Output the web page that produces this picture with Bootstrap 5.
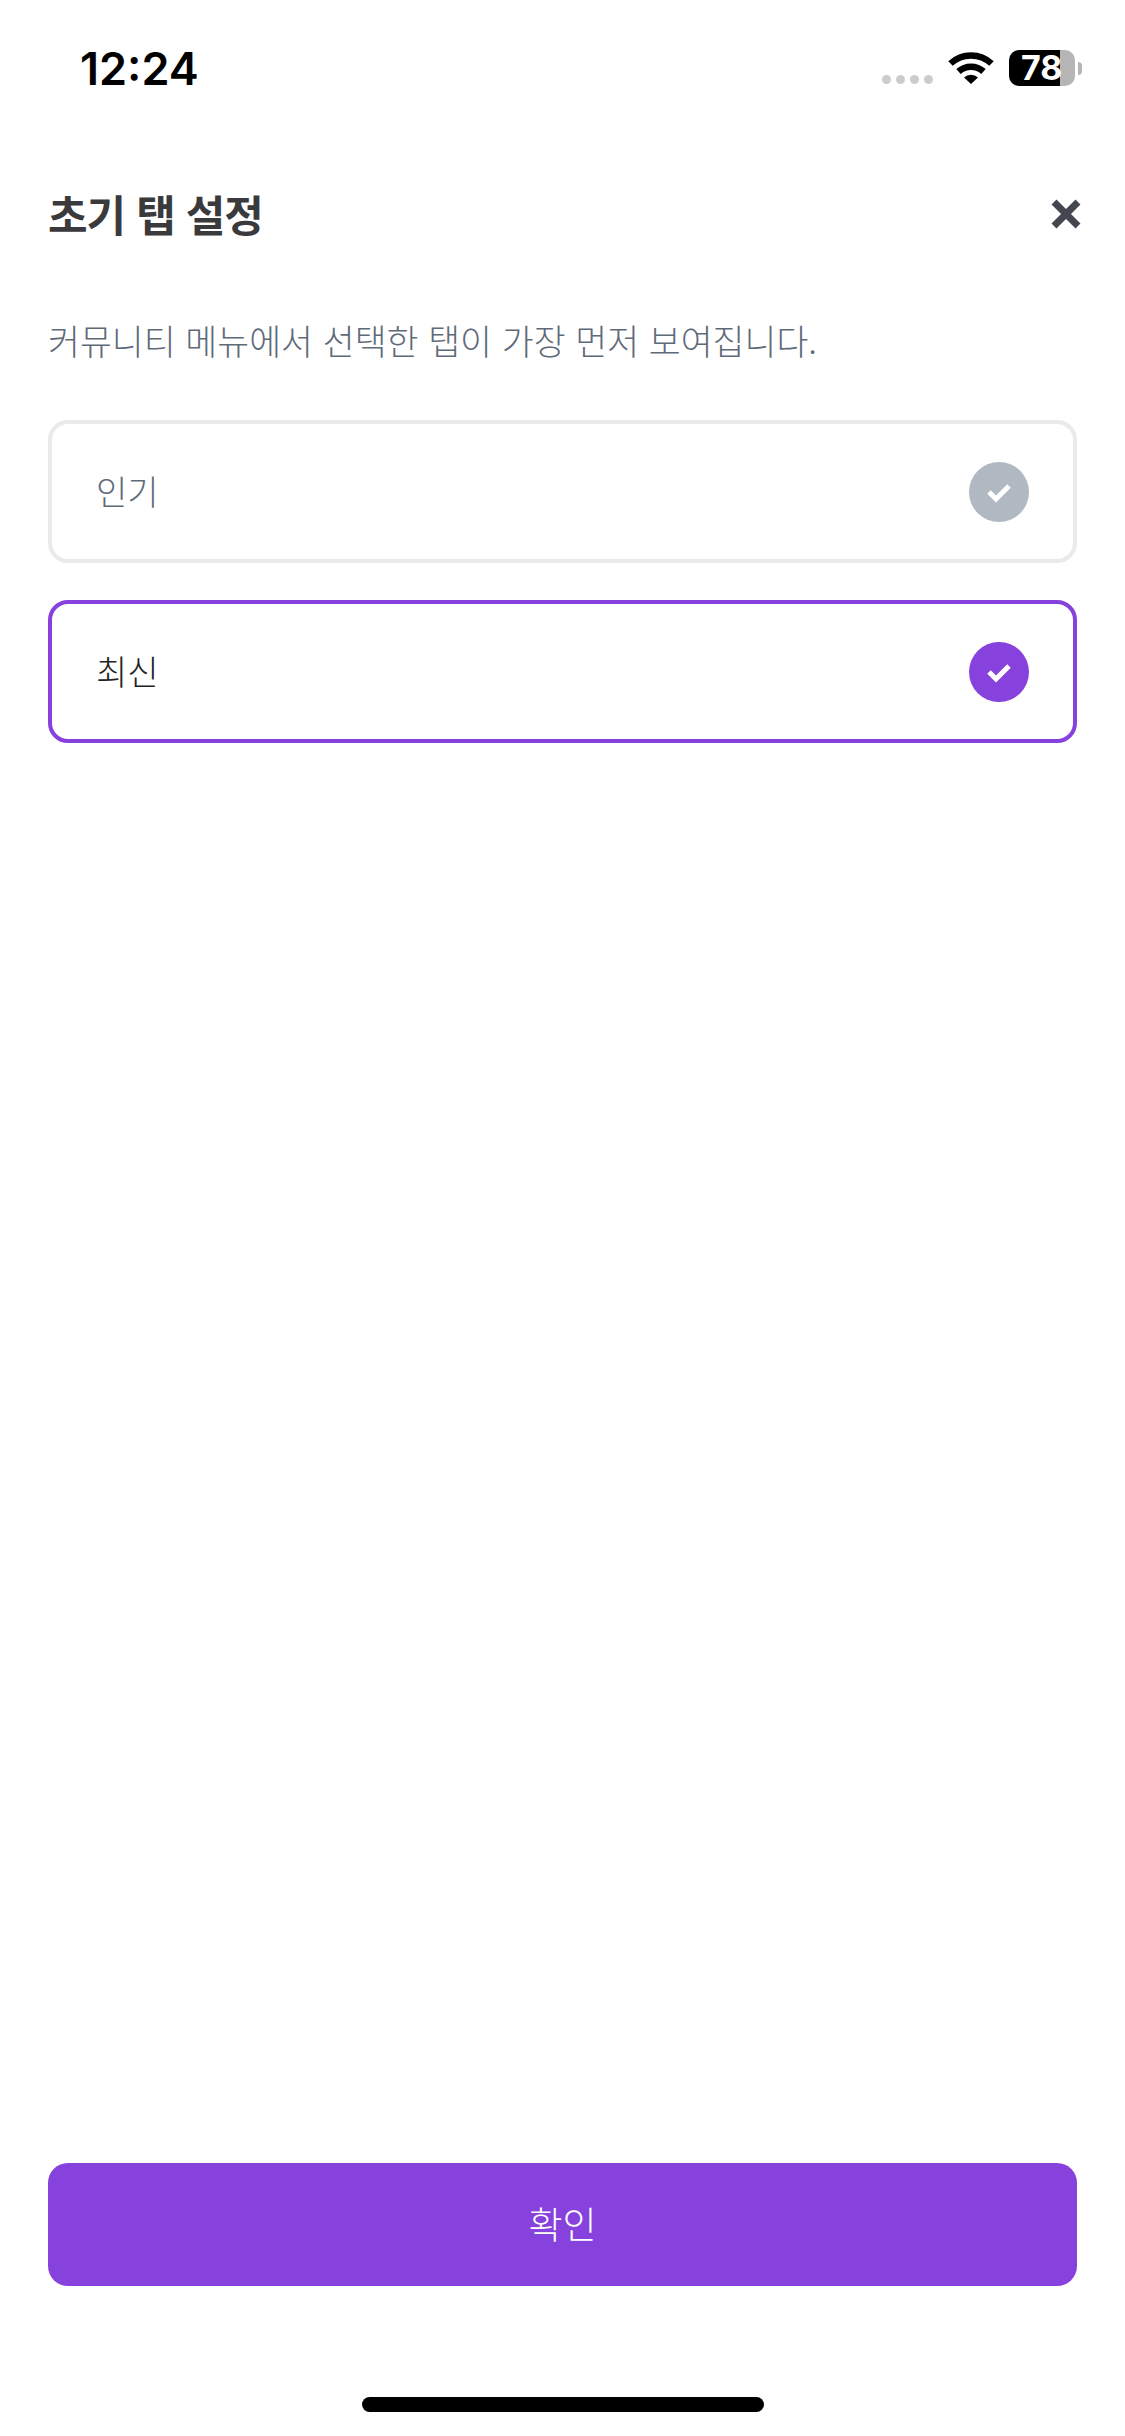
<!DOCTYPE html>
<html lang="ko">
  <head>
    <meta charset="UTF-8" />
    <meta name="viewport" content="width=device-width, initial-scale=1.0" />
    <title>초기 탭 설정</title>
    <link
      href="https://cdn.jsdelivr.net/npm/bootstrap@5.3.0/dist/css/bootstrap.min.css"
      rel="stylesheet"
    />
    <style>
      body {
        font-family: "Inter", "Noto Sans CJK KR", sans-serif;
        background: #fff;
      }
      .screen {
        width: 1125px;
        height: 2436px;
      }
      .status-bar {
        height: 174px;
        padding: 50px 43px 0 80px;
      }
      .clock {
        font-size: 45px;
        font-weight: 600;
        line-height: 38px;
        color: #000;
      }
      .status-right {
        height: 38px;
      }
      .cell-dots {
        gap: 5px;
        margin-top: 25px;
        margin-right: 15px;
      }
      .cell-dots span {
        width: 9px;
        height: 9px;
        background: #ccc;
        border-radius: 50%;
      }
      .wifi-icon {
        width: 46px;
        height: 34px;
        margin-right: 15px;
      }
      .battery {
        width: 66px;
        height: 36px;
        border-radius: 10px;
        background: linear-gradient(to right, #000 51px, #b5b5b5 51px);
        color: #fff;
        font-size: 34px;
        font-weight: 700;
        line-height: 36px;
        padding-left: 12px;
        letter-spacing: 0;
      }
      .battery-nub {
        width: 4px;
        height: 13px;
        margin: 12px 0 0 3px;
        background: #b5b5b5;
        border-radius: 0 4px 4px 0;
      }
      .sheet-head {
        padding: 0 43px 0 48px;
        height: 80px;
      }
      .sheet-title {
        font-family: "Noto Sans CJK KR", sans-serif;
        font-size: 43px;
        font-weight: 700;
        color: #3a3a3c;
        margin: 0;
        letter-spacing: -1px;
      }
      .close-icon {
        width: 32px;
        height: 32px;
      }
      .sheet-desc {
        font-family: "Noto Sans CJK KR", sans-serif;
        font-size: 34.7px;
        font-weight: 300;
        color: #5f6a78;
        padding: 0 48px;
        margin: 62px 0 0;
        line-height: 48px;
      }
      .option-list {
        padding: 0 48px;
        margin-top: 56px;
        gap: 37px;
      }
      .tab-option {
        height: 143px;
        border: 4px solid #e9eaec;
        border-radius: 20px;
        padding: 0 44px;
        font-family: "Noto Sans CJK KR", sans-serif;
        font-size: 34px;
        font-weight: 300;
        color: #5f6a78;
      }
      .tab-option.picked {
        border-color: #8741dc;
        color: #222;
      }
      .option-label {
        margin-bottom: 3px;
      }
      .check-dot {
        width: 60px;
        height: 60px;
        background: #b0b8c1;
      }
      .picked .check-dot {
        background: #8741dc;
      }
      .check-dot svg {
        width: 28px;
        height: 22px;
      }
      .confirm-btn {
        height: 123px;
        margin: 0 48px;
        padding-bottom: 8px;
        background: #8741dc;
        border: 0;
        border-radius: 20px;
        color: #fff;
        font-family: "Noto Sans CJK KR", sans-serif;
        font-size: 37px;
        font-weight: 300;
      }
      .confirm-btn:hover {
        background: #8741dc;
        color: #fff;
      }
      .home-bar {
        width: 402px;
        height: 15px;
        background: #000;
        border-radius: 8px;
        margin: 111px auto 24px;
      }
    </style>
  </head>
  <body>
    <div class="screen d-flex flex-column">
      <div class="status-bar d-flex justify-content-between align-items-start">
        <div class="clock">12:24</div>
        <div class="status-right d-flex align-items-start">
          <div class="cell-dots d-flex">
            <span></span><span></span><span></span><span></span>
          </div>
          <svg class="wifi-icon" viewBox="0 0 46 34">
            <path d="M2.5 13.5 A30 30 0 0 1 43.5 13.5" fill="none" stroke="#000" stroke-width="6.5" />
            <path d="M10.5 21.5 A18.5 18.5 0 0 1 35.5 21.5" fill="none" stroke="#000" stroke-width="6.5" />
            <path d="M16 27.5 A10 10 0 0 1 30 27.5 L23 34 Z" fill="#000" />
          </svg>
          <div class="battery">78</div>
          <div class="battery-nub"></div>
        </div>
      </div>

      <div class="sheet-head d-flex justify-content-between align-items-center">
        <h1 class="sheet-title">초기 탭 설정</h1>
        <svg class="close-icon" viewBox="0 0 32 32">
          <path d="M4 4 L28 28 M28 4 L4 28" stroke="#44474f" stroke-width="7" fill="none" />
        </svg>
      </div>

      <p class="sheet-desc">커뮤니티 메뉴에서 선택한 탭이 가장 먼저 보여집니다.</p>

      <div class="option-list d-flex flex-column">
        <div class="tab-option d-flex justify-content-between align-items-center">
          <span class="option-label">인기</span>
          <span class="check-dot rounded-circle d-flex justify-content-center align-items-center">
            <svg viewBox="0 0 28 22">
              <path d="M4 11 L11 18 L24 5" fill="none" stroke="#fff" stroke-width="5" />
            </svg>
          </span>
        </div>
        <div class="tab-option picked d-flex justify-content-between align-items-center">
          <span class="option-label">최신</span>
          <span class="check-dot rounded-circle d-flex justify-content-center align-items-center">
            <svg viewBox="0 0 28 22">
              <path d="M4 11 L11 18 L24 5" fill="none" stroke="#fff" stroke-width="5" />
            </svg>
          </span>
        </div>
      </div>

      <button type="button" class="btn confirm-btn mt-auto">확인</button>
      <div class="home-bar"></div>
    </div>

    <script src="https://cdn.jsdelivr.net/npm/bootstrap@5.3.0/dist/js/bootstrap.bundle.min.js"></script>
  </body>
</html>
